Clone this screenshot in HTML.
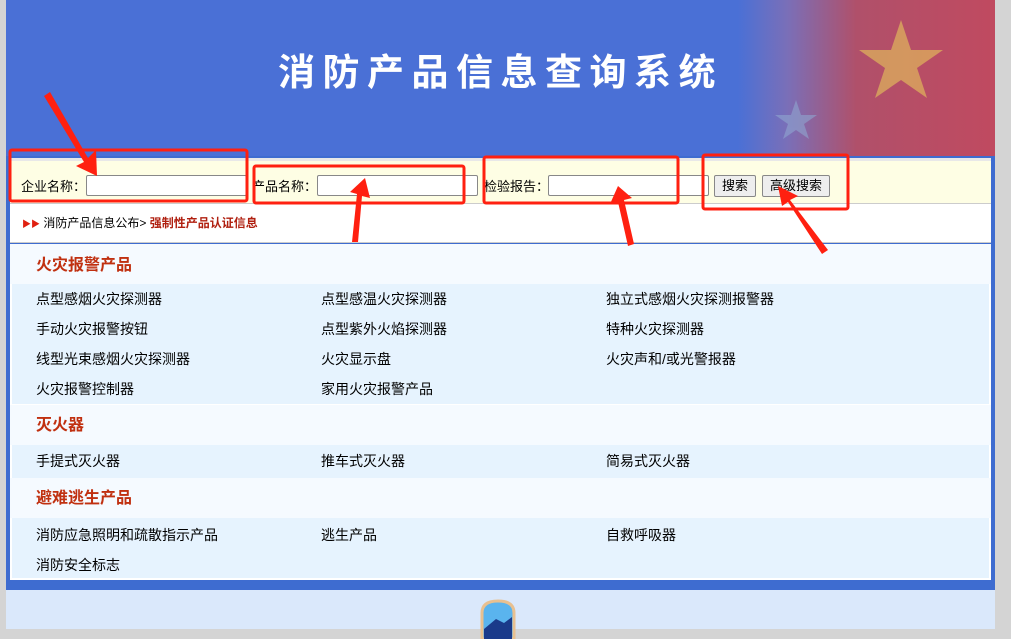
<!DOCTYPE html><html><head><meta charset="utf-8"><style>
*{margin:0;padding:0;box-sizing:border-box}
body{width:1011px;height:629px;overflow:hidden;background:#d4d4d4;font-family:"Liberation Sans","Noto Sans CJK SC",sans-serif;font-size:13px;position:relative}
.wrap{position:absolute;left:6px;top:0;width:989px;height:629px;background:#dae8fb}
.hdr{position:absolute;left:0;top:0;width:989px;height:156px;background:linear-gradient(90deg,#4a70d6 0%,#4a70d6 74%,#7a6fb8 79%,#b0506a 86%,#c04a60 100%)}
.title{position:absolute;left:272px;top:43px;font-size:37px;font-weight:bold;color:#fff;letter-spacing:7.5px;font-family:"Noto Sans CJK SC",sans-serif;line-height:52px}
.main{position:absolute;left:0;top:156px;width:989px;height:434px;background:#3e6cd0;padding:0 4px}
.sb{position:absolute;left:4px;top:2px;width:981px;height:45px;background:#fefee4;border-top:3px solid #e8e8e8}
.sb span{position:absolute;top:15px;font-size:13px;color:#000}
.sb .in{position:absolute;top:14px;height:21px;background:#fff;border:1px solid #888;border-radius:2px}
.btn{position:absolute;top:14px;height:22px;background:#eee;border:1px solid #888;border-radius:2px;font-size:13px;text-align:center;line-height:20px}
.bc{position:absolute;left:4px;top:47px;width:981px;height:40px;background:#fff;border-top:1px solid #ccc;border-bottom:1px solid #ccc;padding:10px 0 0 12px;font-size:12px}
.list{position:absolute;left:4px;top:88px;width:981px;height:336px;background:#fff}
.h{position:absolute;left:0;width:981px;background:#f5faff;color:#c03010;font-size:16px;font-weight:bold;padding-left:26px}
.r{position:absolute;left:2px;width:977px;background:#e6f3fe}
.r span{position:absolute;font-size:14px;color:#000}
</style></head><body>
<div class="wrap">
<div class="hdr">
<svg width="989" height="156" style="position:absolute;left:0;top:0"><g fill="#e8c85a" opacity=".6"><polygon points="895,20 905,50 937,50 911,68 921,98 895,80 869,98 879,68 853,50 885,50"/><polygon points="790,100 795,115 811,115 798,124 803,139 790,130 777,139 782,124 769,115 785,115" fill="#8fa6d0"/></g></svg>
<div class="title">消防产品信息查询系统</div></div>
<div class="main">
<div class="sb">
<span style="left:11px">企业名称：</span><div class="in" style="left:76px;width:161px"></div>
<span style="left:242px">产品名称：</span><div class="in" style="left:307px;width:161px"></div>
<span style="left:474px">检验报告：</span><div class="in" style="left:538px;width:161px"></div>
<div class="btn" style="left:704px;width:42px">搜索</div>
<div class="btn" style="left:752px;width:68px">高级搜索</div>
</div>
<div class="bc"><span style="color:#e02010;font-size:9px">▶▶</span> 消防产品信息公布&gt; <span style="color:#b02010;font-weight:bold">强制性产品认证信息</span></div>
<div class="list">
<div class="h" style="top:0;height:40px;line-height:44px">火灾报警产品</div>
<div class="r" style="top:40px;height:120px">
<span style="left:24px;top:5px">点型感烟火灾探测器</span><span style="left:309px;top:5px">点型感温火灾探测器</span><span style="left:594px;top:5px">独立式感烟火灾探测报警器</span>
<span style="left:24px;top:35px">手动火灾报警按钮</span><span style="left:309px;top:35px">点型紫外火焰探测器</span><span style="left:594px;top:35px">特种火灾探测器</span>
<span style="left:24px;top:65px">线型光束感烟火灾探测器</span><span style="left:309px;top:65px">火灾显示盘</span><span style="left:594px;top:65px">火灾声和/或光警报器</span>
<span style="left:24px;top:95px">火灾报警控制器</span><span style="left:309px;top:95px">家用火灾报警产品</span></div>
<div class="h" style="top:161px;height:40px;line-height:42px">灭火器</div>
<div class="r" style="top:201px;height:33px">
<span style="left:24px;top:6px">手提式灭火器</span><span style="left:309px;top:6px">推车式灭火器</span><span style="left:594px;top:6px">简易式灭火器</span></div>
<div class="h" style="top:234px;height:40px;line-height:42px">避难逃生产品</div>
<div class="r" style="top:274px;height:60px">
<span style="left:24px;top:7px">消防应急照明和疏散指示产品</span><span style="left:309px;top:7px">逃生产品</span><span style="left:594px;top:7px">自救呼吸器</span>
<span style="left:24px;top:37px">消防安全标志</span></div>
</div></div>
<svg width="60" height="40" style="position:absolute;left:468px;top:599px"><path d="M8,40 V14 Q8,2 24,2 Q40,2 40,14 V40Z" fill="#5ab4ee" stroke="#e8c090" stroke-width="3"/><path d="M10,30 L22,20 L30,24 L38,18 V40 H10Z" fill="#1a3a8a"/></svg>
</div>
<svg width="1011" height="629" style="position:absolute;left:0;top:0" fill="none" stroke="#ff2010" stroke-width="3">
<rect x="10" y="150" width="237" height="51" rx="2"/><rect x="254" y="166" width="210" height="37" rx="2"/><rect x="484" y="157" width="194" height="46" rx="2"/><rect x="703" y="155" width="145" height="54" rx="2"/>
<g fill="#ff2010" stroke="none">
<polygon points="44,96 50,92 88,158 96,150 97,176 76,166 84,162"/>
<polygon points="352,242 358,242 362,196 370,198 365,178 350,192 357,194"/>
<polygon points="628,246 634,244 624,200 632,198 618,186 610,204 618,202"/>
<polygon points="822,254 828,250 790,200 798,196 778,186 782,206 788,202"/>
</g></svg>
</body></html>
